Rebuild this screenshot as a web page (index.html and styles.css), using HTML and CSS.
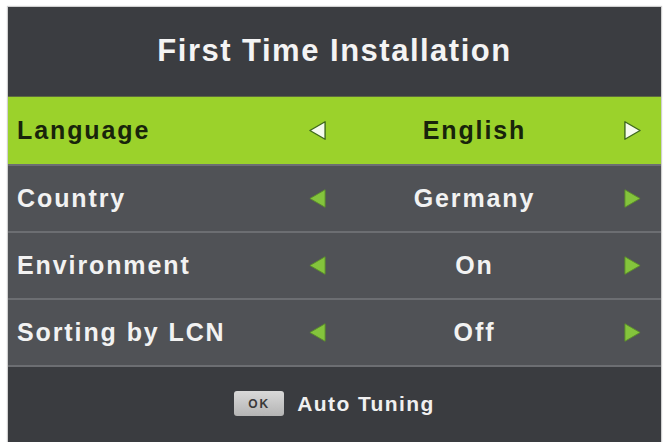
FILE: index.html
```html
<!DOCTYPE html>
<html>
<head>
<meta charset="utf-8">
<link rel="stylesheet" href="styles.css">
</head>
<body>
<div class="panel">
  <div class="header">First Time Installation</div>
  <div class="row active">
    <div class="label">Language</div>
    <div class="arrow"><svg viewBox="0 0 16 18" class="tri"><polygon points="14.5,1.5 14.5,16.5 1.5,9"/></svg></div>
    <div class="value">English</div>
    <div class="arrow"><svg viewBox="0 0 16 18" class="tri"><polygon points="1.5,1.5 1.5,16.5 14.5,9"/></svg></div>
  </div>
  <div class="row">
    <div class="label">Country</div>
    <div class="arrow"><svg viewBox="0 0 16 18" class="tri"><polygon points="14.5,1.5 14.5,16.5 1.5,9"/></svg></div>
    <div class="value">Germany</div>
    <div class="arrow"><svg viewBox="0 0 16 18" class="tri"><polygon points="1.5,1.5 1.5,16.5 14.5,9"/></svg></div>
  </div>
  <div class="row">
    <div class="label">Environment</div>
    <div class="arrow"><svg viewBox="0 0 16 18" class="tri"><polygon points="14.5,1.5 14.5,16.5 1.5,9"/></svg></div>
    <div class="value">On</div>
    <div class="arrow"><svg viewBox="0 0 16 18" class="tri"><polygon points="1.5,1.5 1.5,16.5 14.5,9"/></svg></div>
  </div>
  <div class="row">
    <div class="label">Sorting by LCN</div>
    <div class="arrow"><svg viewBox="0 0 16 18" class="tri"><polygon points="14.5,1.5 14.5,16.5 1.5,9"/></svg></div>
    <div class="value">Off</div>
    <div class="arrow"><svg viewBox="0 0 16 18" class="tri"><polygon points="1.5,1.5 1.5,16.5 14.5,9"/></svg></div>
  </div>
  <div class="footer">
    <span class="ok">OK</span>
    <span class="hint">Auto Tuning</span>
  </div>
</div>
</body>
</html>
```
FILE: styles.css
```css
html, body {
  margin: 0;
  padding: 0;
  background: #ffffff;
}
body {
  font-family: "Liberation Sans", Arial, sans-serif;
  font-weight: bold;
  height: 442px;
  overflow: hidden;
}
.panel {
  margin: 7px 7px 0 8px;
  width: 653px;
  height: 435px;
  background: #3a3c40;
  display: flex;
  flex-direction: column;
  box-shadow: 0 0 1px 1px rgba(120,120,120,0.35);
}
.header {
  height: 89px;
  display: flex;
  align-items: center;
  justify-content: center;
  color: #f4f4f4;
  font-size: 31px;
  letter-spacing: 1.5px;
  background: #3b3d41;
  padding-bottom: 2px;
  box-sizing: border-box;
}
.row {
  height: 67px;
  box-sizing: border-box;
  display: grid;
  grid-template-columns: 282px 36px 1fr 36px;
  align-items: center;
  padding: 0 11px 0 9px;
  background: #505256;
  border-top: 2px solid #6c6e72;
  color: #f2f2f2;
  font-size: 25px;
  letter-spacing: 1.9px;
}
.row.active {
  height: 68px;
  background: #9bd22b;
  border-top: 1px solid #5d6a40;
  color: #18240b;
}
.label {
  white-space: nowrap;
}
.value {
  text-align: center;
}
.arrow {
  display: flex;
  justify-content: center;
  align-items: center;
}
.tri {
  width: 19px;
  height: 21px;
  flex: none;
}
.tri polygon {
  fill: #84c43c;
  stroke: #5b8f2a;
  stroke-width: 0.8;
  stroke-linejoin: round;
}
.row.active .tri polygon {
  fill: #f6fbef;
  stroke: #3f6a1c;
  stroke-width: 1.2;
}
.footer {
  flex: 1;
  border-top: 2px solid #6c6e72;
  background: #3a3c40;
  display: flex;
  align-items: center;
  justify-content: center;
  gap: 13px;
  padding-bottom: 2px;
}
.ok {
  width: 50px;
  height: 25px;
  border-radius: 3px;
  background: linear-gradient(#d9d9d9, #b4b4b4);
  color: #3a3a3a;
  font-size: 12px;
  letter-spacing: 2px;
  display: flex;
  align-items: center;
  justify-content: center;
  box-sizing: border-box;
}
.hint {
  color: #f0f0f0;
  font-size: 21px;
  letter-spacing: 1.4px;
}
```
